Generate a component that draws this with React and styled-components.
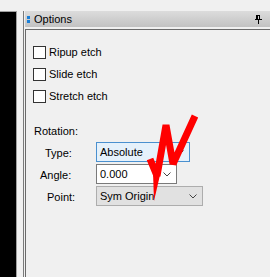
import React from "react";
import styled, { createGlobalStyle } from "styled-components";

const GlobalStyle = createGlobalStyle`
  html, body {
    margin: 0;
    padding: 0;
    background: #f0f0f0;
    overflow: hidden;
  }
  body {
    font-family: "Liberation Sans", Arial, sans-serif;
    font-size: 11px;
    color: #000;
  }
`;

const Screen = styled.div`
  position: relative;
  width: 270px;
  height: 277px;
  display: flex;
  flex-direction: row;
  gap: 6px;
  background: #f0f0f0;
`;

const BlackPane = styled.div`
  width: 16px;
  margin-top: 11px;
  background: #000;
  border-top: 1px solid #a0a0a0;
  border-right: 1px solid #a0a0a0;
`;

const Panel = styled.div`
  flex: 1;
  margin-top: 11px;
  border-left: 1px solid #7a7a7a;
  padding-left: 1px;
  display: flex;
  flex-direction: column;
`;

const TitleBar = styled.div`
  height: 16px;
  display: flex;
  align-items: center;
  padding-left: 2px;
  background: linear-gradient(#dcdcdc, #c2c2c2);
`;

const Grip = styled.div`
  display: flex;
  flex-direction: column;
  gap: 1px;
  margin-right: 4px;

  span {
    width: 3px;
    height: 3px;
    background: #1a7fd8;
  }
`;

const Title = styled.div`
  flex: 1;
  line-height: 13px;
`;

const Pin = styled.svg`
  margin-right: 8px;
  margin-top: 1px;
`;

const Body = styled.div`
  flex: 1;
  margin-top: 2px;
  border-top: 1px solid #6a6a6a;
  border-left: 1px solid #6a6a6a;
  padding: 16px 0 0 7px;
  display: flex;
  flex-direction: column;
`;

const CheckList = styled.div`
  display: flex;
  flex-direction: column;
  gap: 9px;
`;

const CheckRow = styled.label`
  display: flex;
  align-items: center;
  gap: 3px;
  height: 13px;
  line-height: 13px;
`;

const Box = styled.span`
  box-sizing: border-box;
  width: 13px;
  height: 13px;
  border: 1px solid #333;
  background: #fff;
`;

const Heading = styled.div`
  margin-top: 22px;
  padding-left: 1px;
  line-height: 13px;
`;

const Fields = styled.div`
  margin-top: 4px;
  display: grid;
  grid-template-columns: 63px auto;
  row-gap: 2px;
  align-items: center;
`;

const Label = styled.div`
  padding-left: ${(p) => p.indent}px;
  padding-top: 2px;
  line-height: 13px;
`;

const Select = styled.div`
  box-sizing: border-box;
  width: ${(p) => p.width}px;
  height: 20px;
  display: flex;
  align-items: center;
  padding: 0 5px 0 3px;
  line-height: 13px;
  border: 1px solid ${(p) => p.border};
  background: ${(p) => p.bg};
`;

const Value = styled.span`
  flex: 1;
`;

const Mark = styled.svg`
  position: absolute;
  left: 0;
  top: 0;
  pointer-events: none;
`;

function Chevron() {
  return (
    <svg width="8" height="5" viewBox="0 0 8 5">
      <polyline points="0.5,0.5 4,4 7.5,0.5" fill="none" stroke="#444" strokeWidth="1" />
    </svg>
  );
}

const kinds = {
  focus: { border: "#4a90cf", bg: "#e5f1fb" },
  edit: { border: "#7a7a7a", bg: "#ffffff" },
  plain: { border: "#adadad", bg: "#e1e1e1" },
};

const fields = [
  { label: "Type:", indent: 12, value: "Absolute", width: 94, kind: "focus" },
  { label: "Angle:", indent: 7, value: "0.000", width: 81, kind: "edit" },
  { label: "Point:", indent: 14, value: "Sym Origin", width: 107, kind: "plain" },
];

export default function App() {
  return (
    <Screen>
      <GlobalStyle />
      <BlackPane />
      <Panel>
        <TitleBar>
          <Grip>
            <span />
            <span />
          </Grip>
          <Title>Options</Title>
          <Pin width="7" height="9" viewBox="0 0 7 9">
            <rect x="1" y="0" width="4" height="1" fill="#000" />
            <rect x="1" y="0" width="2" height="5" fill="#000" />
            <rect x="4" y="0" width="1" height="5" fill="#000" />
            <rect x="0" y="4" width="7" height="1" fill="#000" />
            <rect x="3" y="5" width="1" height="4" fill="#000" />
          </Pin>
        </TitleBar>
        <Body>
          <CheckList>
            {["Ripup etch", "Slide etch", "Stretch etch"].map((t) => (
              <CheckRow key={t}>
                <Box />
                {t}
              </CheckRow>
            ))}
          </CheckList>
          <Heading>Rotation:</Heading>
          <Fields>
            {fields.map((f) => (
              <React.Fragment key={f.label}>
                <Label indent={f.indent}>{f.label}</Label>
                <Select width={f.width} border={kinds[f.kind].border} bg={kinds[f.kind].bg}>
                  <Value>{f.value}</Value>
                  <Chevron />
                </Select>
              </React.Fragment>
            ))}
          </Fields>
        </Body>
      </Panel>
      <Mark width="270" height="277" viewBox="0 0 270 277">
        <polyline
          points="150,159 157,176 166,125 173,164 195,116"
          fill="none"
          stroke="#ff0000"
          strokeWidth="7"
          strokeLinejoin="bevel"
        />
        <polygon points="153,172 160,175 154,201" fill="#ff0000" />
      </Mark>
    </Screen>
  );
}
